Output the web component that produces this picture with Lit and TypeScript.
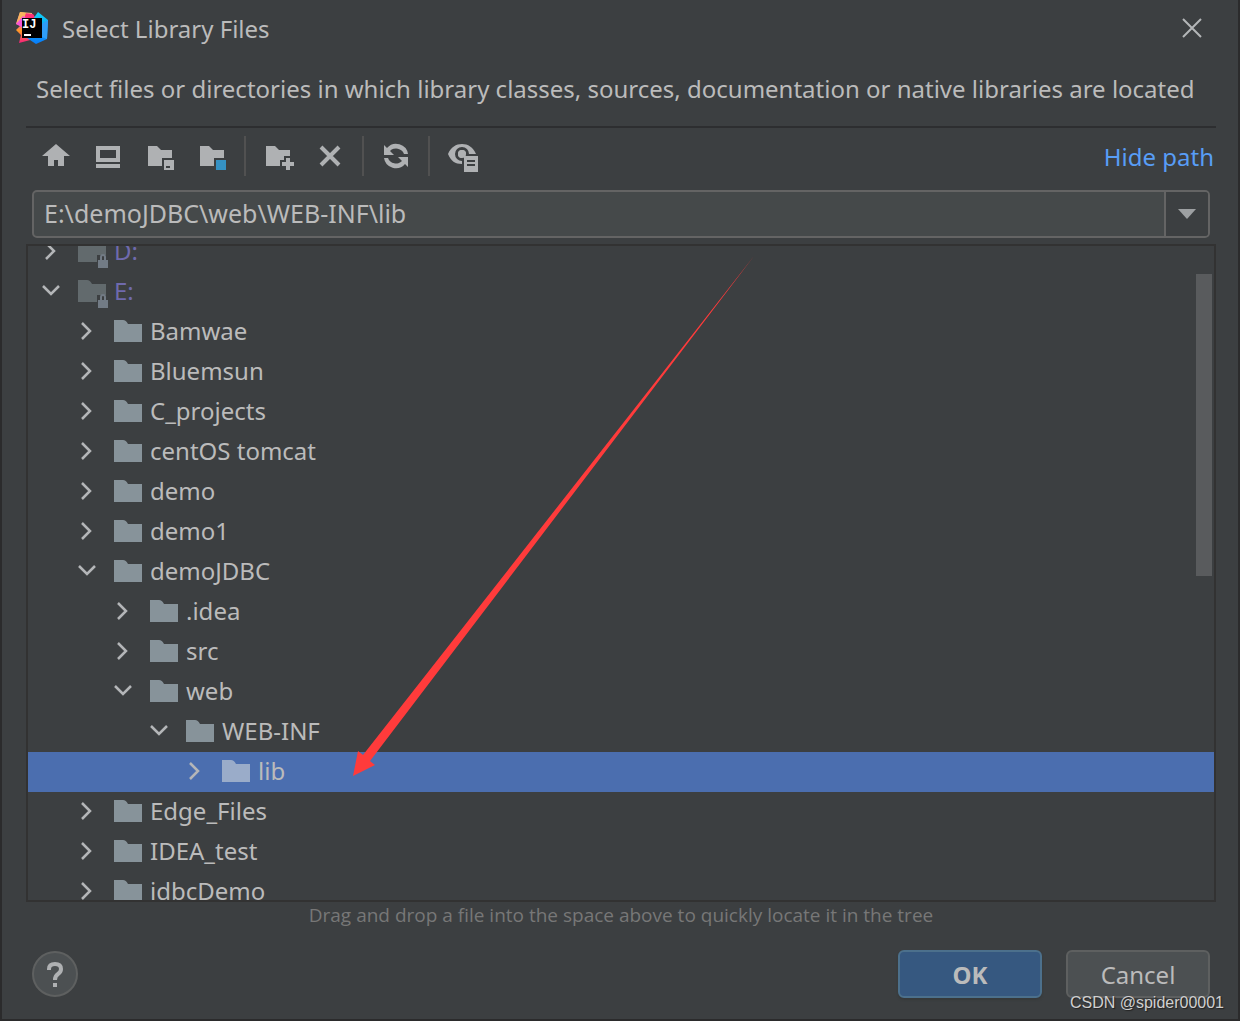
import { LitElement, html, svg, css } from "lit";
import { customElement, property, state } from "lit/decorators.js";
import { classMap } from "lit/directives/class-map.js";

interface TreeNode {
  name: string;
  depth: number;
  open?: boolean;
  drive?: boolean;
}

const NODES: TreeNode[] = [
  { name: "D:", depth: 0, drive: true },
  { name: "E:", depth: 0, drive: true, open: true },
  { name: "Bamwae", depth: 1 },
  { name: "Bluemsun", depth: 1 },
  { name: "C_projects", depth: 1 },
  { name: "centOS tomcat", depth: 1 },
  { name: "demo", depth: 1 },
  { name: "demo1", depth: 1 },
  { name: "demoJDBC", depth: 1, open: true },
  { name: ".idea", depth: 2 },
  { name: "src", depth: 2 },
  { name: "web", depth: 2, open: true },
  { name: "WEB-INF", depth: 3, open: true },
  { name: "lib", depth: 4 },
  { name: "Edge_Files", depth: 1 },
  { name: "IDEA_test", depth: 1 },
  { name: "idbcDemo", depth: 1 },
];

const ICONS: Record<string, unknown> = {
  home: svg`<path d="M16 4 30 16H24V26H18V20H14V26H8V16H2Z"/>`,
  desktop: svg`<path fill-rule="evenodd" d="M4 6H28V22H4ZM8 10V18H24V10Z"/><path d="M4 24H28V28H4Z"/>`,
  project: svg`<path d="M4 6H13L17 10H28V18H18V26H4Z"/><path fill-rule="evenodd" d="M20 20H30V30H20ZM22 26V28H26V26Z"/>`,
  module: svg`<path d="M4 6H13L17 10H28V18H18V26H4Z"/><path class="blue" d="M20 20H30V30H20Z"/>`,
  newFolder: svg`<path d="M4 6H13L17 10H28V16H22V20H18V26H4Z"/><path d="M24 18H28V22H32V26H28V30H24V26H20V22H24Z"/>`,
  remove: svg`<path class="line" d="M7 7 25 25M25 7 7 25"/>`,
  refresh: svg`<path d="M4 5 7 8A12 12 0 0 1 28 14H24A8.500 8.500 0 0 0 10 11L14 15H4Z"/><path d="M28 27 25 24A12 12 0 0 1 4 18H8A8.500 8.500 0 0 0 22 21L18 17H28Z"/>`,
  hidden: svg`<path fill-rule="evenodd" d="M2 14C5 7 10 4 16 4S27 7 30 14H16V24C9 24 5 21 2 14ZM16 7A7 7 0 1 0 16 21V18A4 4 0 1 1 20 14H23A7 7 0 0 0 16 7Z"/><circle cx="16" cy="14" r="4"/><path fill-rule="evenodd" d="M18 16H32V32H18ZM21 20V22H29V20ZM21 24V26H29V24Z"/>`,
};

@customElement("tree-row")
class TreeRow extends LitElement {
  @property({ attribute: false }) node!: TreeNode;
  @property({ type: Boolean, reflect: true }) selected = false;

  static styles = css`
    :host {
      display: block;
    }
    :host([selected]) {
      background: #4b6eaf;
    }
    .row {
      display: flex;
      align-items: center;
      height: 40px;
    }
    .toggle {
      display: flex;
      margin: 0 14px 0 12px;
      padding: 0;
      border: 0;
      background: none;
    }
    .chevron {
      width: 24px;
      height: 24px;
      fill: none;
      stroke: #b4b6b8;
      stroke-width: 2.5;
    }
    .folder {
      width: 32px;
      height: 32px;
      fill: #87939a;
    }
    :host([selected]) .folder {
      fill: #9aacc9;
    }
    .drive .folder {
      fill: #626a6d;
    }
    .folder .lock {
      fill: #727b85;
    }
    .folder .shackle {
      fill: none;
      stroke: #727b85;
      stroke-width: 2;
    }
    .entry {
      display: flex;
      align-items: center;
      gap: 4px;
    }
    .name {
      padding-bottom: 2px;
      line-height: 32px;
      white-space: pre;
    }
    .drive .name {
      color: #6f6aad;
    }
  `;

  render() {
    const n = this.node;
    return html`<div class=${classMap({ row: true, drive: !!n.drive })} style="padding-left:${n.depth * 36}px">
      <button class="toggle" aria-label=${n.open ? "Collapse" : "Expand"}>
        <svg class="chevron" viewBox="0 0 24 24">
          <path d=${n.open ? "M3 6 11 14 19 6" : "M6 3 14 11 6 19"} />
        </svg>
      </button>
      <span class="entry">
        <svg class="folder" viewBox="0 0 32 32">
          ${n.drive
            ? svg`<path d="M0 4H9Q12 4 14 8H28V19H19V26H0Z"/><path class="lock" d="M20 24H30V32H20Z"/><path class="shackle" d="M23 24V21Q23 19 25 19T27 21V24"/>`
            : svg`<path d="M0 4H9Q12 4 14 8H28V26H0Z"/>`}
        </svg>
        <span class="name">${n.name}</span>
      </span>
    </div>`;
  }
}

@customElement("app-root")
class AppRoot extends LitElement {
  @state() private selected = "lib";

  static styles = css`
    :host {
      display: block;
      height: 100vh;
      box-sizing: border-box;
      padding: 0 2px 2px;
      background: #2b2b2c;
      color: #bbbbbb;
      font: 24px/32px "Noto Sans", "Open Sans", sans-serif;
    }
    * {
      box-sizing: border-box;
    }
    button,
    input {
      font: inherit;
      color: inherit;
    }
    .dialog {
      position: relative;
      display: flex;
      flex-direction: column;
      height: 100%;
      padding: 0 22px 0 24px;
      background: #3c3f41;
      overflow: hidden;
    }
    .title {
      display: flex;
      align-items: center;
      gap: 12px;
      height: 58px;
      margin-left: -12px;
      padding-bottom: 2px;
    }
    .logo {
      width: 36px;
      height: 36px;
    }
    .monogram {
      fill: #ffffff;
      font: 700 12px "Liberation Mono", monospace;
    }
    h1 {
      flex: 1;
      margin: 0;
      padding-top: 2px;
      font: inherit;
    }
    .plain {
      display: flex;
      padding: 0;
      border: 0;
      background: none;
    }
    .close {
      margin-right: 12px;
    }
    .close svg {
      width: 24px;
      height: 24px;
      stroke: #b4b6b8;
      stroke-width: 2;
    }
    .description {
      margin: 0;
      padding: 15px 0 21px 10px;
      border-bottom: 2px solid #2d2e30;
      white-space: nowrap;
    }
    .toolbar {
      display: flex;
      align-items: center;
      height: 62px;
      padding: 0 2px 6px 14px;
      gap: 20px;
    }
    .tool svg {
      width: 32px;
      height: 32px;
      fill: #afb1b3;
    }
    .tool .line {
      fill: none;
      stroke: #afb1b3;
      stroke-width: 4;
    }
    .tool .blue {
      fill: #3592c4;
    }
    .divider {
      width: 2px;
      height: 40px;
      margin: 0 -4px;
      background: #515151;
    }
    .link {
      margin-left: auto;
      padding-top: 2px;
      color: #589df6;
      text-decoration: none;
    }
    .path {
      display: flex;
      height: 48px;
      margin: 0 6px;
      border: 2px solid #646464;
      border-radius: 5px;
      background: #45494a;
      overflow: hidden;
    }
    .path input {
      flex: 1;
      min-width: 0;
      padding: 0 10px 3px;
      border: 0;
      outline: 0;
      background: none;
      font-size: 25px;
    }
    .drop {
      align-items: center;
      justify-content: center;
      width: 44px;
      border-left: 2px solid #646464;
      background: #3c3f41;
    }
    .drop svg {
      width: 18px;
      height: 10px;
      fill: #9da0a2;
    }
    .tree {
      position: relative;
      flex: 1;
      min-height: 0;
      margin-top: 6px;
      border: 2px solid #323232;
      overflow: hidden;
    }
    .rows {
      margin-top: -14px;
    }
    .thumb {
      position: absolute;
      top: 28px;
      right: 2px;
      width: 16px;
      height: 302px;
      background: #595b5d;
    }
    .arrow {
      position: absolute;
      left: 322px;
      top: 10px;
      width: 406px;
      height: 524px;
      fill: #ff3b3b;
      pointer-events: none;
    }
    .hint {
      margin: 0;
      font: 19px/26px "Open Sans", "Noto Sans", sans-serif;
      text-align: center;
      color: #777777;
    }
    .footer {
      display: flex;
      align-items: center;
      gap: 24px;
      padding: 22px 6px 21px;
    }
    .help {
      width: 46px;
      height: 46px;
      margin-right: auto;
      border: 2px solid #5e6060;
      border-radius: 50%;
      background: #4c5052;
      align-items: center;
      justify-content: center;
    }
    .help svg {
      width: 20px;
      height: 28px;
      fill: #afb1b3;
    }
    .help .hook {
      fill: none;
      stroke: #afb1b3;
      stroke-width: 4;
    }
    .action {
      width: 144px;
      height: 48px;
      padding: 2px 0 0;
      border: 2px solid #5e6060;
      border-radius: 6px;
      background: #4c5052;
    }
    .primary {
      border-color: #4c708c;
      background: #365880;
      font-weight: 700;
      box-shadow: 0 2px 2px #36393a;
    }
    .credit {
      position: absolute;
      right: 14px;
      bottom: 5px;
      font: 16px/22px "Liberation Sans", Arial, sans-serif;
      color: #d0d0d0;
      text-shadow: 1px 1px 1px #222222;
    }
  `;

  private tool(name: string, label: string) {
    return html`<button class="plain tool" aria-label=${label}>
      <svg viewBox="0 0 32 32">${ICONS[name]}</svg>
    </button>`;
  }

  render() {
    return html`<main class="dialog">
      <header class="title">
        <svg class="logo" viewBox="0 0 36 36">
          <defs>
            <linearGradient id="warm" x1="0" y1="0" x2="0" y2="1">
              <stop offset="0" stop-color="#fbc56a" />
              <stop offset=".35" stop-color="#f74ac0" />
              <stop offset=".6" stop-color="#ff9a26" />
              <stop offset="1" stop-color="#f51e7d" />
            </linearGradient>
            <linearGradient id="cool" x1="0" y1="0" x2="0" y2="1">
              <stop offset="0" stop-color="#12d0f4" />
              <stop offset="1" stop-color="#087cfa" />
            </linearGradient>
          </defs>
          <path fill="url(#warm)" d="M6 2 18 3 20 29 5 33 7 25 2 20 6 16 2 14Z" />
          <path fill="#fe3176" d="M10 3 19 4 23 10 11 8Z" />
          <path fill="#f9b35f" d="M6 2 12 3 9 11 2 14Z" />
          <path fill="#f653d8" d="M9 6 12 8 8 17 2 14Z" />
          <path fill="url(#cool)" d="M24 2 34 10 33 29 22 34 13 28 21 25 19 9Z" />
          <path fill="#2f9df7" d="M28 14 34 10 33 29 25 26Z" />
          <path d="M8 8H28V28H8Z" />
          <text class="monogram" x="8" y="18">IJ</text>
          <path fill="#ffffff" d="M10 24H17V26H10Z" />
        </svg>
        <h1>Select Library Files</h1>
        <button class="plain close" aria-label="Close">
          <svg viewBox="0 0 24 24"><path d="M3 3 21 21M21 3 3 21" /></svg>
        </button>
      </header>
      <p class="description">Select files or directories in which library classes, sources, documentation or native libraries are located</p>
      <nav class="toolbar">
        ${this.tool("home", "Home")} ${this.tool("desktop", "Desktop")} ${this.tool("project", "Project directory")}
        ${this.tool("module", "Module directory")}
        <span class="divider"></span>
        ${this.tool("newFolder", "New folder")} ${this.tool("remove", "Delete")}
        <span class="divider"></span>
        ${this.tool("refresh", "Refresh")}
        <span class="divider"></span>
        ${this.tool("hidden", "Show hidden files")}
        <a class="link" href="#">Hide path</a>
      </nav>
      <div class="path">
        <input type="text" aria-label="Path" .value=${"E:\\demoJDBC\\web\\WEB-INF\\lib"} />
        <button class="plain drop" aria-label="Recent paths">
          <svg viewBox="0 0 18 10"><path d="M0 0H18L9 10Z" /></svg>
        </button>
      </div>
      <section class="tree">
        <div class="rows">
          ${NODES.map(
            (n) => html`<tree-row
              .node=${n}
              ?selected=${n.name === this.selected}
              @click=${() => (this.selected = n.name)}
            ></tree-row>`
          )}
        </div>
        <div class="thumb"></div>
        <svg class="arrow" viewBox="0 0 406 524">
          <path d="M404 0 13 499 8 495 3 520 25 509 20 505Z" />
        </svg>
      </section>
      <p class="hint">Drag and drop a file into the space above to quickly locate it in the tree</p>
      <footer class="footer">
        <button class="plain help" aria-label="Help">
          <svg viewBox="0 0 20 28">
            <path class="hook" d="M4 10V9Q4 4 10 4T16 9Q16 12 13 14T10 20" />
            <path d="M8 23H12V27H8Z" />
          </svg>
        </button>
        <button class="action primary">OK</button>
        <button class="action">Cancel</button>
      </footer>
      <span class="credit">CSDN @spider00001</span>
    </main>`;
  }
}
